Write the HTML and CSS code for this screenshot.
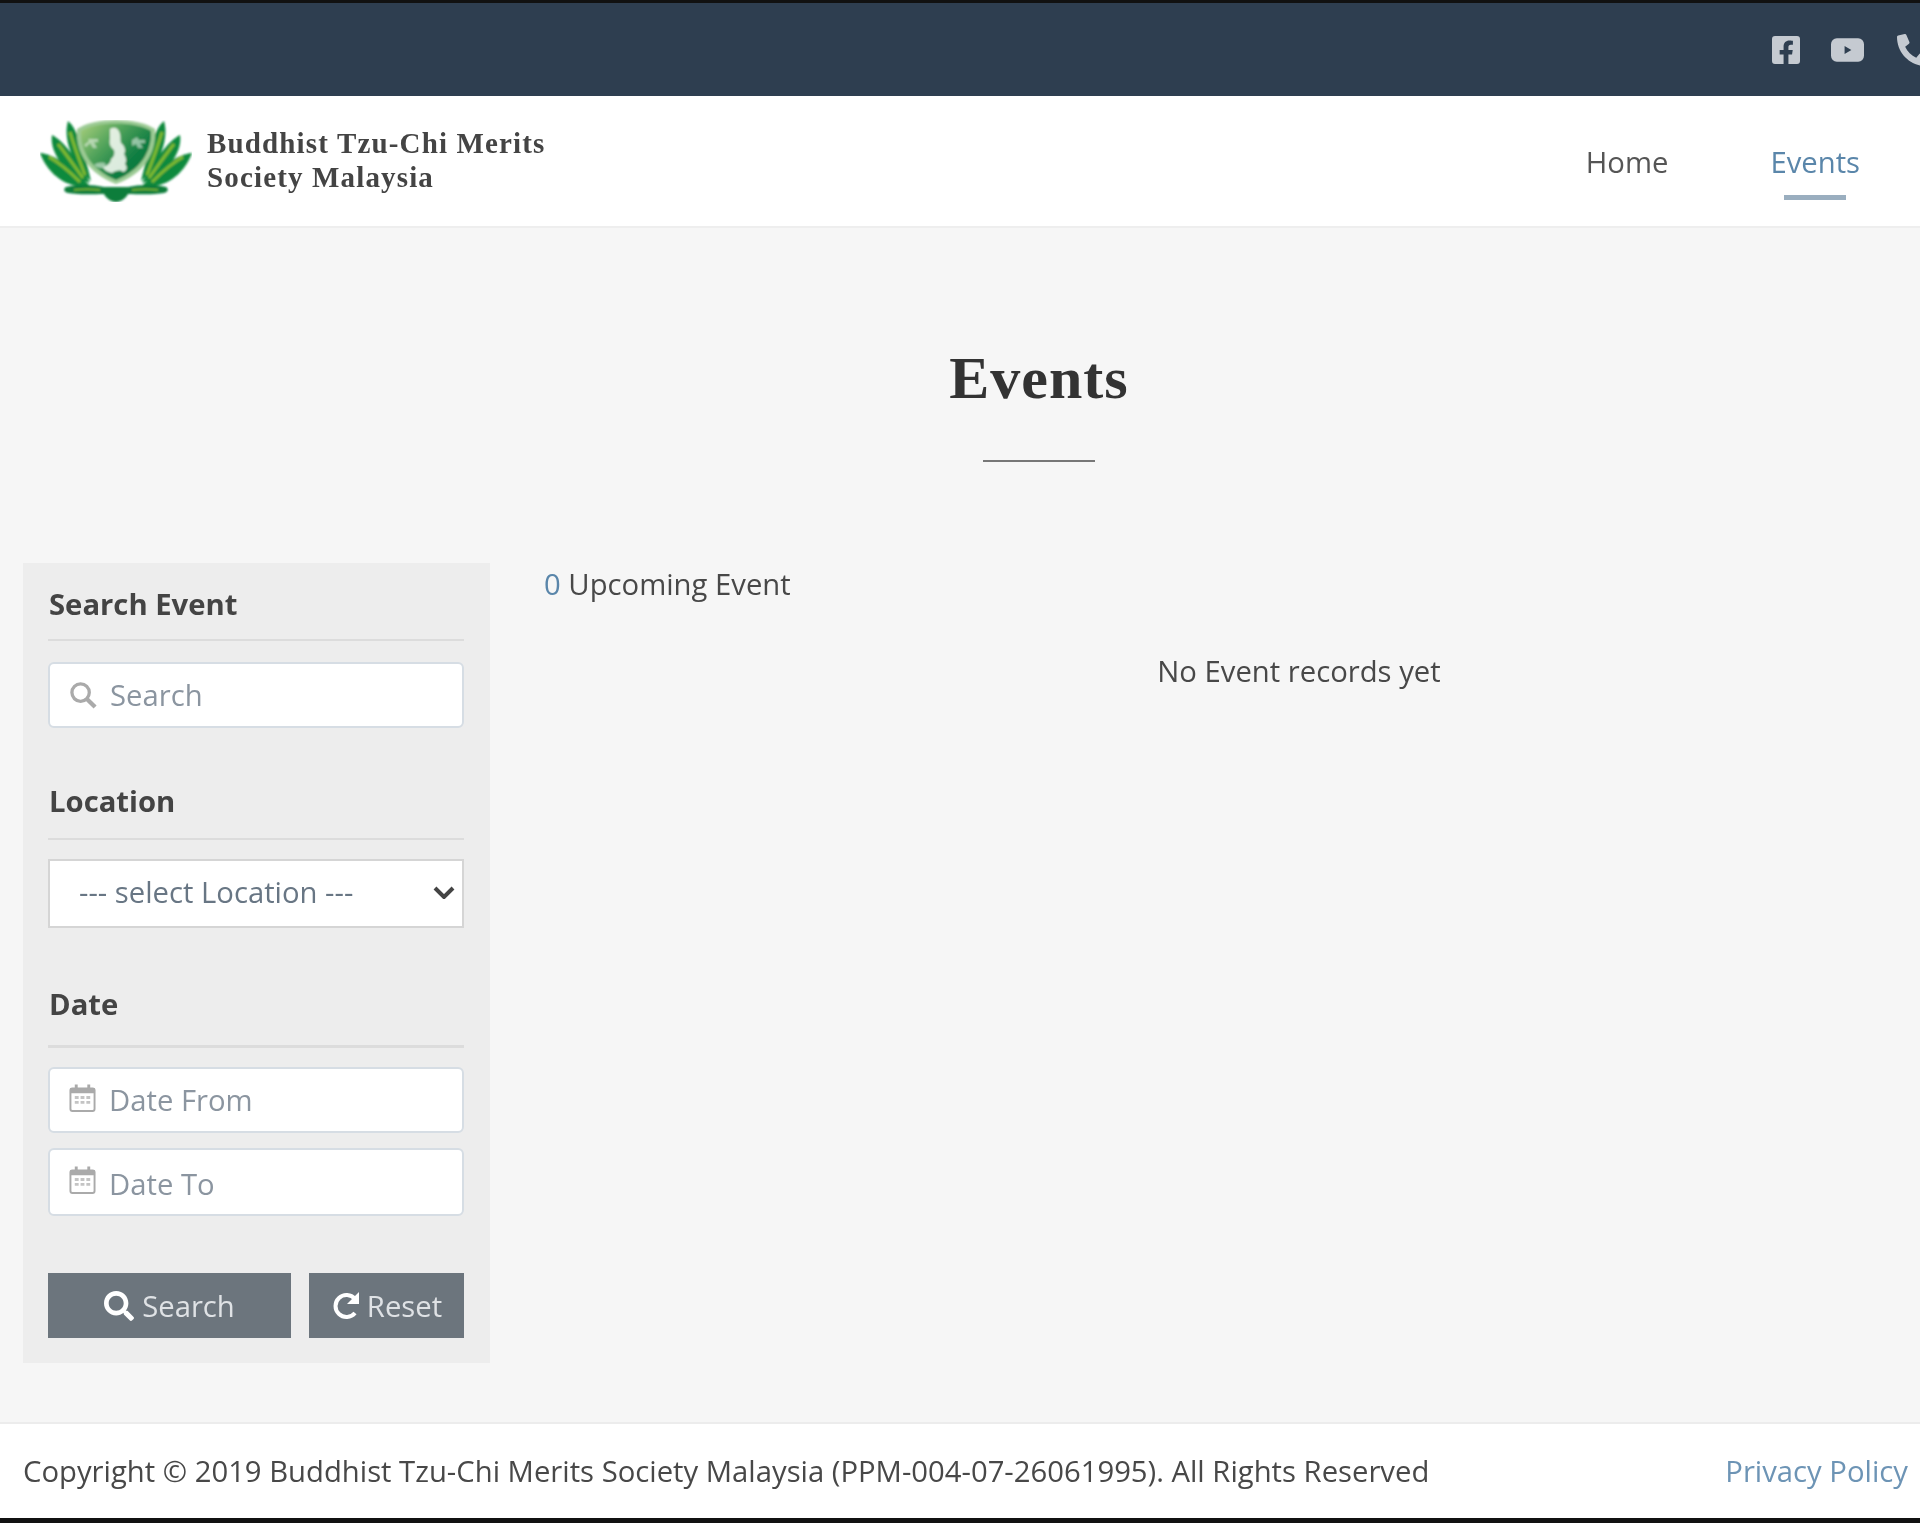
FILE: index.html
```html
<!DOCTYPE html>
<html lang="en">
<head>
    <meta charset="UTF-8">
    <meta name="viewport" content="width=device-width, initial-scale=1.0">
    <title>Events - Buddhist Tzu-Chi Merits Society Malaysia</title>
    <link rel="stylesheet" href="styles.css">
</head>
<body>
    <!-- top bar -->
    <div class="topbar">
        <a class="social" href="#"><svg class="icon-fb" viewBox="0 0 448 512"><path d="M400 32H48A48 48 0 0 0 0 80v352a48 48 0 0 0 48 48h137.25V327.69h-63V256h63v-54.64c0-62.15 37-96.48 93.67-96.48 27.14 0 55.52 4.84 55.52 4.84v61h-31.27c-30.81 0-40.42 19.12-40.42 38.73V256h68.78l-11 71.69h-57.78V480H400a48 48 0 0 0 48-48V80a48 48 0 0 0-48-48z"/></svg></a>
        <a class="social" href="#"><svg class="icon-yt" viewBox="0 0 34 24"><path fill-rule="evenodd" d="M6 0h22a6 6 0 0 1 6 6v12a6 6 0 0 1-6 6H6a6 6 0 0 1-6-6V6a6 6 0 0 1 6-6zm8 8v8l7-4z"/></svg></a>
        <a class="social social-phone" href="#"><svg class="icon-phone" viewBox="0 0 368 512"><path transform="matrix(-1 0 0 1 512 0)" d="M493.4 24.6l-104-24c-11.3-2.6-22.9 3.3-27.5 13.9l-48 112c-4.2 9.8-1.4 21.3 6.9 28l60.6 49.6c-36 76.7-98.9 140.5-177.2 177.2l-49.6-60.6c-6.8-8.3-18.2-11.1-28-6.9l-112 48C3.9 366.5-2 378.1.6 389.4l24 104C27.1 504.2 36.7 512 48 512c256.1 0 464-207.5 464-464 0-11.2-7.7-20.9-18.6-23.4z"/></svg></a>
    </div>

    <!-- header -->
    <header class="site-header">
        <a class="brand" href="#">
            <svg class="logo" viewBox="0 0 152 82">
                <defs>
                    <linearGradient id="shield" x1="0" y1="0" x2="1" y2="0.8">
                        <stop offset="0" stop-color="#a9cf7c"/>
                        <stop offset="0.4" stop-color="#4fa25a"/>
                        <stop offset="0.75" stop-color="#0f7d42"/>
                        <stop offset="1" stop-color="#0c7a3c"/>
                    </linearGradient>
                    <filter id="soft"><feGaussianBlur stdDeviation="0.8"/></filter>
                </defs>
                <g filter="url(#soft)">
                    <g fill="#0f8a3c">
                        <path d="M0 33c14 1 32 14 50 33-23 4-43-13-50-33z"/>
                        <path d="M12 15c12 6 27 27 38 48-21-7-41-28-38-48z"/>
                        <path d="M28 1c10 8 17 35 23 60C36 49 22 22 28 1z"/>
                        <path d="M152 33c-14 1-32 14-50 33 23 4 43-13 50-33z"/>
                        <path d="M140 15c-12 6-27 27-38 48 21-7 41-28 38-48z"/>
                        <path d="M124 1c-10 8-17 35-23 60 15-12 29-39 23-60z"/>
                    </g>
                    <g fill="none" stroke="#7fba30" stroke-width="3">
                        <path d="M9 37c11 6 21 15 31 25"/>
                        <path d="M18 24c8 10 17 23 25 34"/>
                        <path d="M30 12c4 14 10 30 15 43"/>
                        <path d="M143 37c-11 6-21 15-31 25"/>
                        <path d="M134 24c-8 10-17 23-25 34"/>
                        <path d="M122 12c-4 14-10 30-15 43"/>
                    </g>
                    <path d="M37 9C54-3 98-3 115 9c2 24-11 45-39 55C49 54 35 33 37 9z" fill="#9ccb94"/>
                    <path d="M41 11C56 1 96 1 111 11c1 21-11 39-35 49C52 50 40 32 41 11z" fill="url(#shield)"/>
                    <g fill="#f1f6ee">
                        <path d="M70 9c5-3 9 0 10 5 1 4 0 6 1 9 4 3 5 8 3 11 2 3 3 7 1 10 3 3 2 7-2 8-3-3-8-1-11 1-5-1-8-3-9-6 4-1 8-4 8-8 3-2 4-5 3-9-4-3-5-7-4-11z" opacity="0.9"/>
                        <path d="M48 19h10v3h-4l3 6h-4l-3-5-4 4-2-2 5-4zM92 20l5-3 2 3h6v3h-5l3 5h-5l-2-4-4 2z" opacity="0.55"/>
                        <path d="M54 45c5-3 9-3 12-1l-2 4c-4 0-7 0-10-3z" opacity="0.55"/>
                    </g>
                    <path d="M26 67c14-3 28-2 38 0 3 0 8 0 12 0s9 0 12 0c10-2 24-3 38 0 3 2 2 5-2 6-12 2-26 1-36 1-2 4-7 8-12 8s-10-4-12-8c-10 0-24 1-36-1-4-1-5-4-2-6z" fill="#0a7d3b"/>
                    <path d="M34 70c8-1 18-1 26 0M92 70c8-1 18-1 26 0" fill="none" stroke="#7fba30" stroke-width="1.5"/>
                </g>
            </svg>
            <span class="brand-name">Buddhist Tzu-Chi Merits<br>Society Malaysia</span>
        </a>
        <nav class="main-nav">
            <a href="#">Home</a>
            <a href="#" class="active">Events</a>
        </nav>
    </header>

    <!-- page content -->
    <main class="content">
        <div class="page-title">
            <h1>Events</h1>
        </div>
        <div class="columns">
            <aside class="filter">
                <h2 class="filter-title">Search Event</h2>
                <div class="field field-search">
                    <svg class="field-icon" viewBox="0 0 30 30"><circle cx="12" cy="12" r="9" fill="none" stroke-width="3.4"/><path d="M18.5 18.5L27 27" fill="none" stroke-width="4.4"/></svg>
                    <input type="text" placeholder="Search">
                </div>

                <h2 class="filter-title location">Location</h2>
                <div class="select-wrap">
                    <select class="select">
                        <option>--- select Location ---</option>
                    </select>
                    <svg class="select-arrow" viewBox="0 0 22 13"><path d="M2 2l9 9 9-9" fill="none" stroke="#444" stroke-width="4"/></svg>
                </div>

                <h2 class="filter-title date">Date</h2>
                <div class="field">
                    <svg class="field-icon calendar" viewBox="0 0 28 30"><use href="#cal"/></svg>
                    <input type="text" placeholder="Date From">
                </div>
                <div class="field field-to">
                    <svg class="field-icon calendar" viewBox="0 0 28 30">
                        <g id="cal">
                            <rect x="1.5" y="5" width="25" height="23.5" rx="2" fill="#fff" stroke="#aaa" stroke-width="2"/>
                            <path d="M1 5h26v5H1zM6 1h3v5H6zM19 1h3v5h-3z" fill="#aaa"/>
                            <path d="M6 13h4v3H6zM12 13h4v3h-4zM18 13h4v3h-4zM6 18h4v3H6zM12 18h4v3h-4zM18 18h4v3h-4z" fill="#c4c4c4"/>
                        </g>
                    </svg>
                    <input type="text" placeholder="Date To">
                </div>

                <div class="filter-buttons">
                    <button type="button" class="btn btn-search"><svg viewBox="0 0 512 512"><path d="M505 442.7L405.3 343c-4.5-4.5-10.6-7-17-7H372c27.6-35.3 44-79.7 44-128C416 93.1 322.9 0 208 0S0 93.1 0 208s93.1 208 208 208c48.3 0 92.7-16.4 128-44v16.3c0 6.4 2.5 12.5 7 17l99.7 99.7c9.4 9.4 24.6 9.4 33.9 0l28.3-28.3c9.4-9.4 9.4-24.6.1-34zM208 336c-70.7 0-128-57.2-128-128 0-70.7 57.2-128 128-128 70.7 0 128 57.2 128 128 0 70.7-57.2 128-128 128z"/></svg>Search</button>
                    <button type="button" class="btn btn-reset"><svg viewBox="0 0 30 30"><path d="M24 22a11 11 0 1 1 0-14" fill="none" stroke="#fff" stroke-width="4"/><path d="M28 1v12H16z" fill="#fff"/></svg>Reset</button>
                </div>
            </aside>

            <section class="results">
                <p class="count"><span>0</span> Upcoming Event</p>
                <p class="empty">No Event records yet</p>
            </section>
        </div>
    </main>

    <!-- footer -->
    <footer class="site-footer">
        <p>Copyright &copy; 2019 Buddhist Tzu-Chi Merits Society Malaysia (PPM-004-07-26061995). All Rights Reserved</p>
        <a href="#">Privacy Policy</a>
    </footer>
</body>
</html>
```

FILE: styles.css
```css
/* page */
html {
    overflow: hidden;
    background: #f6f6f6;
}

body {
    margin: 0;
    height: 1523px;
    box-sizing: border-box;
    display: flex;
    flex-direction: column;
    border-top: 3px solid #111;
    border-bottom: 5px solid #111;
    background: #f6f6f6;
    color: #484848;
    font-family: "Open Sans", "Liberation Sans", sans-serif;
    font-size: 29.25px;
    overflow: hidden;
    filter: blur(0.7px);
}

a {
    text-decoration: none;
}

/* top bar */
.topbar {
    height: 93px;
    flex: none;
    display: flex;
    justify-content: flex-end;
    align-items: center;
    gap: 31px;
    background: #2e3e50;
}

.social {
    display: flex;
}

.social-phone {
    margin-left: 2px;
}

.social svg {
    fill: #c5cad1;
}

.icon-fb {
    width: 28px;
    height: 32px;
}

.icon-yt {
    width: 33px;
    height: 24px;
}

.icon-phone {
    width: 23px;
    height: 32px;
}

/* header */
.site-header {
    height: 132px;
    flex: none;
    box-sizing: border-box;
    display: flex;
    justify-content: space-between;
    align-items: center;
    padding: 0 60px 0 40px;
    background: #fff;
    border-bottom: 2px solid #eee;
}

.brand {
    display: flex;
    align-items: center;
    gap: 15px;
}

.logo {
    width: 152px;
    height: 82px;
}

.brand-name {
    font-family: "Liberation Serif", serif;
    font-weight: bold;
    font-size: 29px;
    letter-spacing: 1.15px;
    line-height: 34px;
    color: #444;
    margin-top: -3px;
}

.main-nav {
    display: flex;
    gap: 102px;
    padding-top: 2px;
}

.main-nav a {
    position: relative;
    color: #555;
}

.main-nav a.active {
    color: #5a86aa;
}

.main-nav a.active::after {
    content: "";
    position: absolute;
    left: 14px;
    right: 14px;
    bottom: -18px;
    height: 5px;
    background: #9aaebf;
}

/* title */
.content {
    flex: 1;
}

.page-title {
    padding: 113px 0 0 158px;
    text-align: center;
}

.page-title h1 {
    margin: 0;
    font-family: "Liberation Serif", serif;
    font-weight: bold;
    font-size: 60px;
    letter-spacing: 1px;
    line-height: 74px;
    color: #333;
}

.page-title h1::after {
    content: "";
    display: block;
    width: 112px;
    height: 2px;
    margin: 45px auto 0;
    background: #777;
}

.columns {
    display: flex;
    margin-top: 101px;
    padding-left: 23px;
}

/* search panel */
.filter {
    width: 467px;
    height: 800px;
    flex: none;
    box-sizing: border-box;
    padding: 0 26px 0 25px;
    background: #ededed;
}

.filter-title {
    margin: 0 0 21px;
    height: 78px;
    line-height: 82px;
    padding-left: 1px;
    box-sizing: border-box;
    font-size: 29.25px;
    font-weight: bold;
    color: #444;
    border-bottom: 2px solid #dcdcdc;
}

.filter-title.location {
    margin: 34px 0 19px;
    line-height: 78px;
}

.filter-title.date {
    margin: 39px 0 19px;
    height: 81px;
    line-height: 74px;
    border-bottom-width: 3px;
}

.field {
    height: 66px;
    box-sizing: border-box;
    display: flex;
    align-items: center;
    padding-left: 19px;
    background: #fff;
    border: 2px solid #d6dde4;
    border-radius: 6px;
}

.field-search input {
    margin-left: 12px;
}

.field-to {
    height: 68px;
    margin-top: 15px;
}

.field-to input {
    padding-top: 5px;
}

.field-icon {
    width: 29px;
    height: 29px;
    flex: none;
    stroke: #aaa;
}

.field-icon.calendar {
    stroke: none;
    width: 27px;
    height: 30px;
    margin-top: -4px;
}

.field input {
    flex: 1;
    min-width: 0;
    margin-left: 13px;
    padding-left: 0;
    padding-right: 0;
    border: none;
    outline: none;
    background: transparent;
    font: inherit;
    color: #444;
}

.field-search input {
    margin-left: 12px;
}

.field input::placeholder {
    color: #8b95a0;
    opacity: 1;
}

.select-wrap {
    position: relative;
}

.select {
    width: 100%;
    height: 69px;
    display: block;
    padding: 0 0 4px 29px;
    background: #fff;
    border: 2px solid #d5d5d5;
    border-radius: 0;
    appearance: none;
    font: inherit;
    color: #687684;
    outline: none;
}

.select-arrow {
    position: absolute;
    top: 27px;
    right: 9px;
    width: 22px;
    height: 13px;
    pointer-events: none;
}

/* buttons */
.filter-buttons {
    display: flex;
    justify-content: space-between;
    margin-top: 57px;
}

.btn {
    height: 65px;
    display: flex;
    align-items: center;
    justify-content: center;
    gap: 8px;
    padding: 0;
    border: none;
    background: #6c757d;
    color: #dfe2e5;
    font: inherit;
}

.btn svg {
    width: 30px;
    height: 30px;
    fill: #fff;
}

.btn-search {
    width: 243px;
}

.btn-reset {
    width: 155px;
    gap: 6px;
}

/* results */
.results {
    flex: 1;
    padding-left: 54px;
}

.results p {
    margin: 0;
}

.count {
    line-height: 42px;
}

.count span {
    color: #5a86aa;
}

.results .empty {
    margin-top: 45px;
    padding-left: 134px;
    text-align: center;
    line-height: 42px;
}

/* footer */
.site-footer {
    height: 96px;
    flex: none;
    box-sizing: border-box;
    display: flex;
    justify-content: space-between;
    align-items: center;
    padding: 0 12px 0 23px;
    background: #fff;
    border-top: 2px solid #ececec;
}

.site-footer p {
    margin: 0;
}

.site-footer a {
    color: #6d94b5;
}
```
